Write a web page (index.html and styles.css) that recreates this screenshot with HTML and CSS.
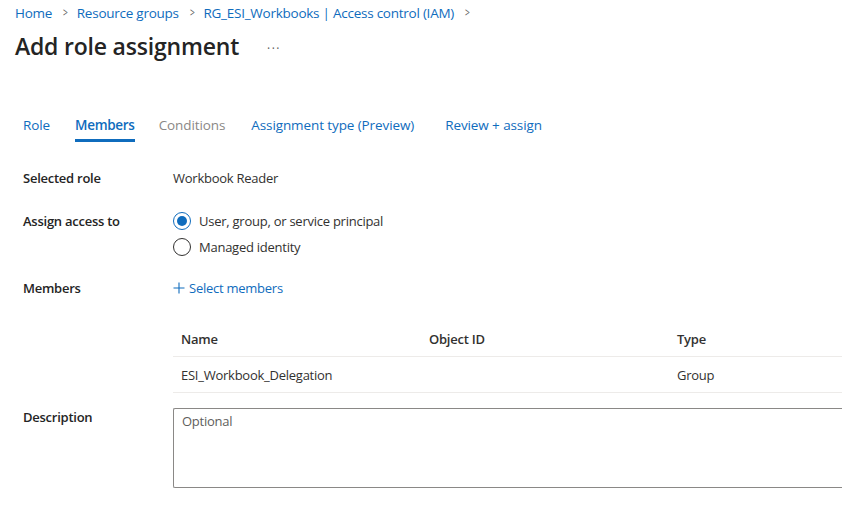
FILE: index.html
```html
<!DOCTYPE html>
<html lang="en">
<head>
<meta charset="utf-8">
<title>Add role assignment</title>
<link rel="stylesheet" href="styles.css">
</head>
<body>
<div class="page">
  <nav class="crumbs">
    <a class="crumb">Home</a><span class="chev">&gt;</span>
    <a class="crumb">Resource groups</a><span class="chev">&gt;</span>
    <a class="crumb">RG_ESI_Workbooks | Access control (IAM)</a><span class="chev">&gt;</span>
  </nav>
  <div class="titlebar">
    <h1 class="title">Add role assignment</h1>
    <span class="more">&middot;&middot;&middot;</span>
  </div>
  <div class="tabs">
    <span class="tab">Role</span>
    <span class="tab active">Members</span>
    <span class="tab disabled">Conditions</span>
    <span class="tab">Assignment type (Preview)</span>
    <span class="tab">Review + assign</span>
  </div>
  <div class="form">
    <div class="row r-role">
      <div class="label">Selected role</div>
      <div class="value">Workbook Reader</div>
    </div>
    <div class="row r-access">
      <div class="label">Assign access to</div>
      <div class="value radios">
        <div class="radio"><span class="circle checked"></span><span>User, group, or service principal</span></div>
        <div class="radio"><span class="circle"></span><span>Managed identity</span></div>
      </div>
    </div>
    <div class="row r-members">
      <div class="label">Members</div>
      <div class="value">
        <a class="link"><svg class="plus" width="12" height="12" viewBox="0 0 12 12"><path d="M6 0.5V11.5M0.5 6H11.5" stroke="#0f6cbd" stroke-width="1.1" fill="none"/></svg>Select members</a>
      </div>
    </div>
    <div class="row r-table">
      <div class="label"></div>
      <div class="value">
        <div class="table">
          <div class="trow thead"><span class="c1">Name</span><span class="c2">Object ID</span><span class="c3">Type</span></div>
          <div class="trow"><span class="c1">ESI_Workbook_Delegation</span><span class="c2"></span><span class="c3">Group</span></div>
        </div>
      </div>
    </div>
    <div class="row r-desc">
      <div class="label">Description</div>
      <div class="value"><div class="textarea">Optional</div></div>
    </div>
  </div>
</div>
</body>
</html>
```
FILE: styles.css
```css
* { box-sizing: border-box; }
html, body { margin: 0; padding: 0; background: #fff; }
body {
  font-family: "Open Sans", "Noto Sans", sans-serif;
  color: #323130;
  font-size: 13px;
  letter-spacing: -0.25px;
  overflow: hidden;
}
.page { width: 842px; height: 508px; overflow: hidden; }

.crumbs {
  display: flex;
  align-items: center;
  padding: 3px 0 0 15px;
  height: 22px;
  font-size: 13.5px;
  letter-spacing: -0.25px;
}
.crumb { color: #0f6cbd; }
.chev {
  color: #605e5c;
  font-size: 12px;
  margin: 0 8px 0 10px;
  transform: scaleX(0.7);
}

.titlebar {
  display: flex;
  align-items: center;
  padding: 8px 0 0 15px;
  height: 40px;
}
.title {
  margin: 0;
  font-size: 23px;
  font-weight: 600;
  letter-spacing: -0.2px;
  color: #242424;
}
.more {
  margin-left: 28px;
  color: #605e5c;
  font-size: 12px;
  letter-spacing: 1.5px;
  margin-top: 4px;
}

.tabs {
  display: flex;
  gap: 24px;
  margin-top: 50px;
  padding-left: 23px;
  height: 31px;
  font-size: 13.5px;
  letter-spacing: -0.1px;
}
.tab {
  color: #0f6cbd;
  padding-top: 4px;
  height: 30px;
}
.tab:nth-child(2) { margin-left: 1px; }
.tab:nth-child(4) { margin-left: 2px; }
.tab:nth-child(5) { margin-left: 7px; }
.tab.active {
  font-weight: 600;
  letter-spacing: -0.3px;
  border-bottom: 3px solid #0f6cbd;
}
.tab.disabled { color: #8a8886; }

.form { padding-left: 23px; margin-top: 26px; }
.row { display: flex; }
.label {
  width: 150px;
  flex: none;
  font-weight: 600;
  color: #242424;
}
.value { flex: 1; min-width: 0; }
.r-role { height: 43px; }
.r-access { height: 67px; }
.radios { display: flex; flex-direction: column; gap: 8px; }
.radio { display: flex; align-items: center; gap: 8px; height: 18px; }
.circle {
  width: 18px; height: 18px;
  border: 1px solid #323130;
  border-radius: 50%;
  flex: none;
  display: flex; align-items: center; justify-content: center;
}
.circle.checked { border-color: #0f6cbd; }
.circle.checked::after {
  content: "";
  width: 10px; height: 10px;
  border-radius: 50%;
  background: #0f6cbd;
}
.r-members { height: 38px; }
.link { color: #0f6cbd; display: inline-flex; align-items: center; }
.plus { margin: 0 4px 0 0; }

.r-table { height: 90px; padding-top: 2px; }
.table { width: 100%; }
.trow {
  display: flex;
  align-items: center;
  height: 36px;
  border-bottom: 1px solid #edebe9;
  padding-left: 8px;
}
.thead { height: 38px; padding-top: 2px; }
.c1 { width: 248px; }
.c2 { width: 248px; }
.c3 { flex: 1; }
.thead span { font-weight: 600; color: #323130; }

.r-desc .label { padding-top: 1px; }
.textarea {
  margin-top: 1px;
  height: 80px;
  border: 1px solid #8a8886;
  border-right: none;
  border-radius: 2px 0 0 2px;
  padding: 3px 8px;
  color: #605e5c;
}
```
